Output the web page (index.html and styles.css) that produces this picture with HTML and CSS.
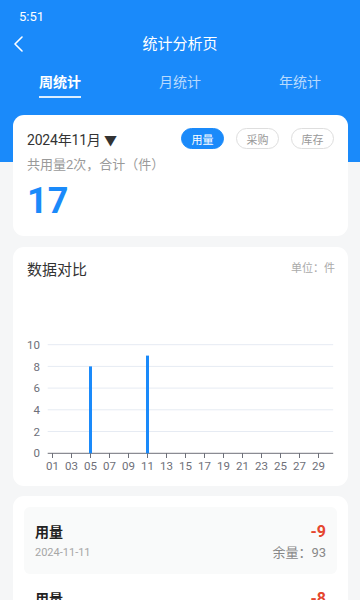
FILE: index.html
```html
<!DOCTYPE html>
<html lang="zh">
<head>
<meta charset="utf-8">
<link rel="stylesheet" href="styles.css">
</head>
<body>
<div class="app">
  <div class="status">5:51</div>
  <div class="nav">
    <svg class="back" width="12" height="16" viewBox="0 0 12 16"><polyline points="9,1 2,8 9,15" fill="none" stroke="#fff" stroke-width="1.6" stroke-linecap="round" stroke-linejoin="round"/></svg>
    <div class="title">统计分析页</div>
  </div>
  <div class="tabs">
    <div class="tab active"><span>周统计</span></div>
    <div class="tab"><span>月统计</span></div>
    <div class="tab"><span>年统计</span></div>
  </div>

  <div class="card summary">
    <div class="row1">
      <div class="month">2024年11月 <span class="caret">▼</span></div>
      <div class="btns">
        <span class="btn on">用量</span>
        <span class="btn">采购</span>
        <span class="btn">库存</span>
      </div>
    </div>
    <div class="sub">共用量2次，合计（件）</div>
    <div class="total">17</div>
  </div>

  <div class="card chart">
    <div class="chart-head">
      <div class="chart-title">数据对比</div>
      <div class="unit">单位：件</div>
    </div>
    <svg class="plot" width="335" height="203" viewBox="13 283 335 203">
      <g stroke="#e6ebf3" stroke-width="1">
        <line x1="47.7" x2="333.2" y1="344.7" y2="344.7"/>
        <line x1="47.7" x2="333.2" y1="366.4" y2="366.4"/>
        <line x1="47.7" x2="333.2" y1="388.1" y2="388.1"/>
        <line x1="47.7" x2="333.2" y1="409.8" y2="409.8"/>
        <line x1="47.7" x2="333.2" y1="431.5" y2="431.5"/>
      </g>
      <line x1="47.7" x2="333.2" y1="453.3" y2="453.3" stroke="#6e7079" stroke-width="1"/>
      <g font-family="Roboto, 'Noto Sans', sans-serif" font-size="11.5" fill="#6e7079" text-anchor="end">
        <text x="40" y="348.8">10</text>
        <text x="40" y="370.5">8</text>
        <text x="40" y="392.2">6</text>
        <text x="40" y="413.9">4</text>
        <text x="40" y="435.6">2</text>
        <text x="40" y="457.4">0</text>
      </g>
      <g stroke="#6e7079" stroke-width="1">
        <line x1="52.5" x2="52.5" y1="453" y2="458"/>
        <line x1="71.5" x2="71.5" y1="453" y2="458"/>
        <line x1="90.5" x2="90.5" y1="453" y2="458"/>
        <line x1="109.5" x2="109.5" y1="453" y2="458"/>
        <line x1="128.5" x2="128.5" y1="453" y2="458"/>
        <line x1="147.5" x2="147.5" y1="453" y2="458"/>
        <line x1="166.5" x2="166.5" y1="453" y2="458"/>
        <line x1="185.5" x2="185.5" y1="453" y2="458"/>
        <line x1="204.5" x2="204.5" y1="453" y2="458"/>
        <line x1="223.5" x2="223.5" y1="453" y2="458"/>
        <line x1="242.5" x2="242.5" y1="453" y2="458"/>
        <line x1="261.5" x2="261.5" y1="453" y2="458"/>
        <line x1="280.5" x2="280.5" y1="453" y2="458"/>
        <line x1="299.5" x2="299.5" y1="453" y2="458"/>
        <line x1="318.5" x2="318.5" y1="453" y2="458"/>
      </g>
      <g font-family="Roboto, 'Noto Sans', sans-serif" font-size="11.5" fill="#6e7079" text-anchor="middle">
        <text x="52.5" y="470">01</text>
        <text x="71.5" y="470">03</text>
        <text x="90.5" y="470">05</text>
        <text x="109.5" y="470">07</text>
        <text x="128.5" y="470">09</text>
        <text x="147.5" y="470">11</text>
        <text x="166.5" y="470">13</text>
        <text x="185.5" y="470">15</text>
        <text x="204.5" y="470">17</text>
        <text x="223.5" y="470">19</text>
        <text x="242.5" y="470">21</text>
        <text x="261.5" y="470">23</text>
        <text x="280.5" y="470">25</text>
        <text x="299.5" y="470">27</text>
        <text x="318.5" y="470">29</text>
      </g>
      <rect x="89" y="366.4" width="3" height="86.9" fill="#1a8afa"/>
      <rect x="146" y="355.6" width="3" height="97.7" fill="#1a8afa"/>
    </svg>
  </div>

  <div class="card list">
    <div class="item">
      <div class="line">
        <span class="kind">用量</span>
        <span class="delta">-9</span>
      </div>
      <div class="line">
        <span class="date">2024-11-11</span>
        <span class="rest">余量：93</span>
      </div>
    </div>
    <div class="item alt">
      <div class="line">
        <span class="kind">用量</span>
        <span class="delta">-8</span>
      </div>
      <div class="line">
        <span class="date">2024-11-05</span>
        <span class="rest">余量：102</span>
      </div>
    </div>
  </div>
</div>
</body>
</html>
```

FILE: styles.css
```css
* { box-sizing: border-box; }
html, body { margin: 0; padding: 0; }
body {
  width: 360px;
  height: 600px;
  overflow: hidden;
  font-family: Roboto, "Noto Sans CJK SC", "Noto Sans", sans-serif;
  background: #f5f6f7;
}
.app {
  min-height: 600px;
  background: linear-gradient(#1a8afa 0, #1a8afa 162px, #f5f6f7 162px);
}
.status {
  height: 32px;
  line-height: 33px;
  padding-left: 19px;
  color: #fff;
  font-size: 13px;
}
.nav {
  position: relative;
  height: 24px;
  display: flex;
  align-items: center;
  justify-content: center;
}
.back {
  position: absolute;
  left: 13px;
  top: 4px;
}
.title {
  color: #fff;
  font-size: 15px;
  line-height: 24px;
}
.tabs {
  display: grid;
  grid-template-columns: repeat(3, 1fr);
  margin-top: 16px;
}
.tab {
  display: flex;
  justify-content: center;
}
.tab span {
  color: rgba(255, 255, 255, 0.7);
  font-size: 14px;
  line-height: 20px;
  padding-bottom: 4px;
  border-bottom: 2px solid transparent;
}
.tab.active span {
  color: #fff;
  font-weight: 600;
  border-bottom-color: rgba(255, 255, 255, 0.85);
}
.card {
  margin: 0 12px 0 13px;
  background: #fff;
  border-radius: 11px;
}
.summary {
  margin-top: 17px;
  padding: 13px 14px 15px;
}
.row1 {
  display: flex;
  align-items: center;
  justify-content: space-between;
  height: 21px;
}
.month {
  font-size: 14px;
  color: #333;
  letter-spacing: -0.2px;
}
.caret {
  font-size: 13px;
  color: #333;
}
.btns {
  display: flex;
  gap: 12px;
}
.btn {
  width: 43px;
  height: 21px;
  border-radius: 11px;
  border: 1px solid #dedede;
  color: #999;
  font-size: 11px;
  display: flex;
  align-items: center;
  justify-content: center;
}
.btn.on {
  background: #1a8afa;
  border-color: #1a8afa;
  color: #fff;
}
.sub {
  margin-top: 7px;
  font-size: 13px;
  line-height: 18px;
  color: #9a9a9a;
}
.total {
  margin-top: 7px;
  font-size: 36px;
  line-height: 40px;
  font-weight: 700;
  color: #1a8afa;
}
.chart {
  margin-top: 11px;
  padding: 0;
  overflow: hidden;
}
.chart-head {
  display: flex;
  justify-content: space-between;
  align-items: flex-start;
  padding: 12px 13px 0 14px;
  height: 36px;
}
.chart-title {
  font-size: 15px;
  line-height: 22px;
  color: #333;
}
.unit {
  font-size: 11px;
  line-height: 20px;
  color: #aaa;
}
.plot {
  display: block;
}
.list {
  margin-top: 10px;
  padding: 11px 11px 0;
}
.item {
  height: 67px;
  padding: 14px 11px 0;
  border-radius: 6px;
  background: #f9fafa;
}
.item.alt {
  background: #fff;
}
.line {
  display: flex;
  justify-content: space-between;
  align-items: center;
}
.kind {
  font-size: 14px;
  line-height: 22px;
  font-weight: 700;
  color: #222;
}
.delta {
  font-size: 16px;
  line-height: 22px;
  font-weight: 700;
  color: #e5462e;
}
.date {
  font-size: 11px;
  line-height: 20px;
  color: #a6a6a6;
}
.rest {
  font-size: 13px;
  line-height: 20px;
  color: #888;
}
```
